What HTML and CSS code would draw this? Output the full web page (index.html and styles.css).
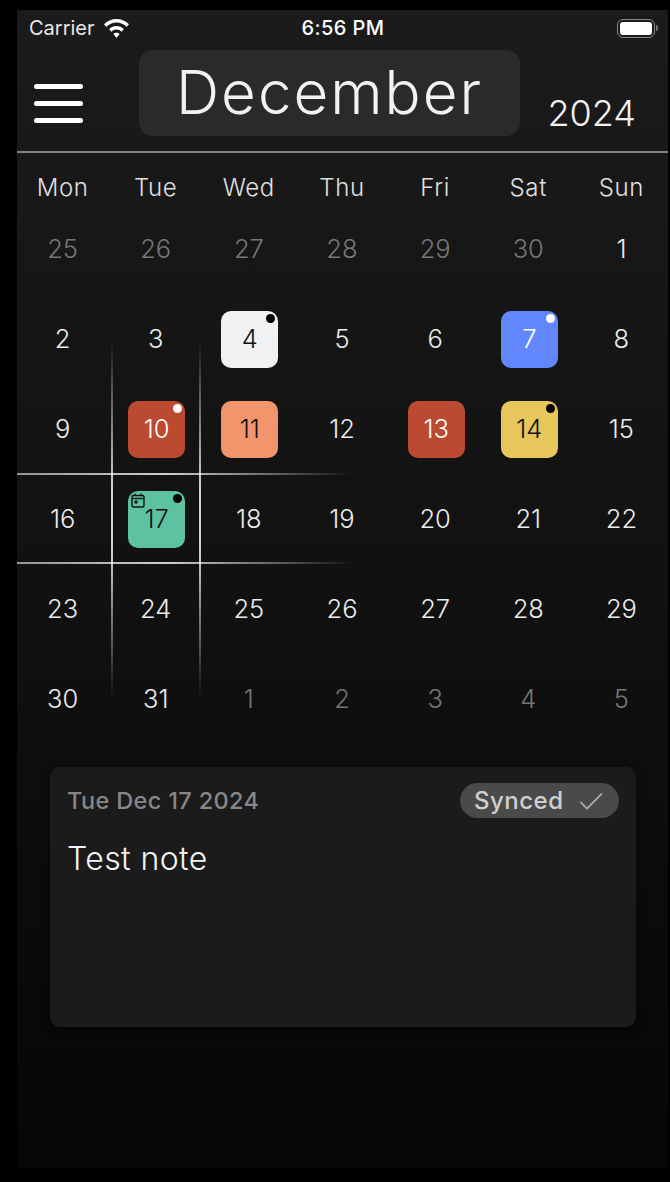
FILE: index.html
```html
<html>

<head>
    <meta charset="utf-8">
    <link rel="stylesheet" href="styles.css">
</head>

<body>
    <div class="screen">
        <div class="status-bar">
            <div class="status-left">
                <span class="carrier">Carrier</span>
                <svg class="wifi" width="25" height="19" viewBox="1 2 23 16.500" preserveAspectRatio="none">
                    <path d="M12.500 2C8 2 4 3.700 1 6.600l2.200 2.300C5.600 6.500 8.900 5.100 12.500 5.100s6.900 1.400 9.300 3.800L24 6.600C21 3.700 17 2 12.500 2z" fill="#fff" />
                    <path d="M12.500 8C10 8 7.500 9 5.700 10.800l2.200 2.300c1.200-1.200 2.800-1.900 4.600-1.900s3.400.7 4.600 1.900l2.200-2.300C17.500 9 15 8 12.500 8z" fill="#fff" />
                    <path d="M12.500 14c-1.100 0-2.100.4-2.800 1.100l2.800 3.400 2.800-3.400c-.7-.7-1.700-1.100-2.800-1.100z" fill="#fff" />
                </svg>
            </div>
            <span class="clock">6:56 PM</span>
            <div class="battery">
                <div class="battery-body"><div class="battery-fill"></div></div>
                <div class="battery-nub"></div>
            </div>
        </div>

        <div class="header">
            <div class="hamburger">
                <span></span>
                <span></span>
                <span></span>
            </div>
            <div class="month">December</div>
            <div class="year">2024</div>
        </div>

        <div class="weekdays">
            <span>Mon</span>
            <span>Tue</span>
            <span>Wed</span>
            <span>Thu</span>
            <span>Fri</span>
            <span>Sat</span>
            <span>Sun</span>
        </div>

        <div class="calendar">
            <div class="day muted">25</div>
            <div class="day muted">26</div>
            <div class="day muted">27</div>
            <div class="day muted">28</div>
            <div class="day muted">29</div>
            <div class="day muted">30</div>
            <div class="day">1</div>

            <div class="day">2</div>
            <div class="day">3</div>
            <div class="day"><div class="tile tile-white">4<i class="dot"></i></div></div>
            <div class="day">5</div>
            <div class="day">6</div>
            <div class="day"><div class="tile tile-blue">7<i class="dot dot-light"></i></div></div>
            <div class="day">8</div>

            <div class="day">9</div>
            <div class="day"><div class="tile tile-red">10<i class="dot dot-light"></i></div></div>
            <div class="day"><div class="tile tile-peach">11</div></div>
            <div class="day">12</div>
            <div class="day"><div class="tile tile-red">13</div></div>
            <div class="day"><div class="tile tile-yellow">14<i class="dot"></i></div></div>
            <div class="day">15</div>

            <div class="day">16</div>
            <div class="day">
                <div class="tile tile-teal">17<i class="dot"></i>
                    <svg class="tile-icon" width="14" height="15" viewBox="0 0 14 15">
                        <rect x="1" y="2.500" width="12" height="11.500" rx="1.500" fill="none" stroke="#111" stroke-width="1.400" />
                        <path d="M1 5.500h12" stroke="#111" stroke-width="1.400" />
                        <path d="M4 .5v2.500M10 .5v2.500" stroke="#111" stroke-width="1.300" />
                        <rect x="3.500" y="7.500" width="3" height="3" fill="#111" />
                    </svg>
                </div>
            </div>
            <div class="day">18</div>
            <div class="day">19</div>
            <div class="day">20</div>
            <div class="day">21</div>
            <div class="day">22</div>

            <div class="day">23</div>
            <div class="day">24</div>
            <div class="day">25</div>
            <div class="day">26</div>
            <div class="day">27</div>
            <div class="day">28</div>
            <div class="day">29</div>

            <div class="day">30</div>
            <div class="day">31</div>
            <div class="day muted">1</div>
            <div class="day muted">2</div>
            <div class="day muted">3</div>
            <div class="day muted">4</div>
            <div class="day muted">5</div>

            <!-- crosshair around the selected day -->
            <div class="line-h line-h-top"></div>
            <div class="line-h line-h-bottom"></div>
            <div class="line-v line-v-left"></div>
            <div class="line-v line-v-right"></div>
        </div>

        <div class="note">
            <div class="note-head">
                <span class="note-date">Tue Dec 17 2024</span>
                <div class="synced">
                    <span>Synced</span>
                    <svg width="24" height="18" viewBox="0 0 24 18">
                        <path d="M1.500 10l6.500 6.500L23 1.500" fill="none" stroke="#b5b5b5" stroke-width="1.600" />
                    </svg>
                </div>
            </div>
            <div class="note-text">Test note</div>
        </div>
    </div>
</body>

</html>
```

FILE: styles.css
```css
body {
    margin: 0;
    background-color: black;
    font-family: "Inter", "Liberation Sans", sans-serif;
}

.screen {
    width: 651px;
    height: 1158px;
    margin-top: 10px;
    margin-left: 17px;
    background: linear-gradient(180deg, #1b1b1b 0%, #101010 55%, #060606 100%);
    color: #f2f2f2;
}

.status-bar {
    height: 36px;
    padding: 0 10px 0 12px;
    display: flex;
    align-items: center;
    justify-content: space-between;
}

.status-left {
    width: 120px;
    display: flex;
    align-items: center;
    gap: 9px;
}

.carrier {
    font-size: 20px;
    color: #e8e8e8;
}

.clock {
    font-size: 20px;
    font-weight: 500;
    letter-spacing: 0.400px;
    margin-right: 80px;
    color: #fff;
}

.battery {
    display: flex;
    align-items: center;
    gap: 1px;
}

.battery-body {
    width: 38px;
    height: 19px;
    box-sizing: border-box;
    padding: 2px;
    border: 1.500px solid #8a8a8a;
    border-radius: 6px;
}

.battery-fill {
    height: 100%;
    background: #fff;
    border-radius: 3px;
}

.battery-nub {
    width: 2px;
    height: 6px;
    background: #777;
    border-radius: 0 2px 2px 0;
}

.header {
    height: 107px;
    box-sizing: border-box;
    padding: 4px 32px 0 17px;
    display: flex;
    align-items: flex-start;
    border-bottom: 2px solid #828282;
}

.hamburger {
    width: 49px;
    margin-top: 34px;
    display: flex;
    flex-direction: column;
    gap: 12px;
}

.hamburger span {
    height: 5px;
    background: #fff;
    border-radius: 3px;
}

.month {
    width: 381px;
    height: 86px;
    margin-left: 56px;
    background: #2a2a2a;
    border-radius: 14px;
    text-align: center;
    font-size: 60px;
    font-weight: 300;
    letter-spacing: 2px;
    line-height: 84px;
}

.year {
    margin-left: auto;
    margin-top: 41px;
    font-size: 36px;
    font-weight: 300;
    line-height: 44px;
}

.weekdays {
    height: 51px;
    box-sizing: border-box;
    padding-top: 21px;
    display: grid;
    grid-template-columns: repeat(7, 93.150px);
    font-size: 24px;
    font-weight: 300;
    letter-spacing: 0.600px;
    line-height: 28px;
    text-align: center;
    color: #e0e0e0;
}

.weekdays span {
    padding-right: 2px;
}

.calendar {
    position: relative;
    display: grid;
    grid-template-columns: repeat(7, 93.150px);
    grid-auto-rows: 90px;
    font-size: 25.500px;
    font-weight: 300;
    color: #ececec;
}

.day {
    display: flex;
    align-items: center;
    justify-content: center;
    padding-right: 2px;
    padding-bottom: 2px;
}

.muted {
    color: #767676;
}

.tile {
    position: relative;
    width: 57px;
    height: 57px;
    box-sizing: border-box;
    margin-left: 2px;
    margin-top: 2px;
    padding-bottom: 2px;
    border-radius: 10px;
    display: flex;
    align-items: center;
    justify-content: center;
    color: #111;
}

.tile-white {
    background: #f0f1f3;
}

.tile-blue {
    background: #6286fb;
    color: #fff;
}

.tile-red {
    background: #bb4a31;
    color: #fff;
}

.tile-peach {
    background: #f2956d;
}

.tile-yellow {
    background: #e7c65c;
}

.tile-teal {
    background: #5cc2a2;
}

.dot {
    position: absolute;
    top: 3px;
    right: 3px;
    width: 9px;
    height: 9px;
    border-radius: 50%;
    background: #000;
}

.dot-light {
    background: #fff;
}

.tile-icon {
    position: absolute;
    top: 2px;
    left: 3px;
}

.line-h {
    position: absolute;
    left: 0;
    width: 335px;
    height: 2px;
    background: linear-gradient(90deg, rgba(255, 255, 255, 0.55) 0%, rgba(255, 255, 255, 0.8) 45%, rgba(255, 255, 255, 0.3) 80%, rgba(255, 255, 255, 0) 100%);
}

.line-h-top {
    top: 269px;
}

.line-h-bottom {
    top: 358px;
}

.line-v {
    position: absolute;
    top: 136px;
    width: 2px;
    height: 358px;
    background: linear-gradient(180deg, rgba(255, 255, 255, 0) 0%, rgba(255, 255, 255, 0.8) 40%, rgba(255, 255, 255, 0.8) 60%, rgba(255, 255, 255, 0) 100%);
}

.line-v-left {
    left: 94px;
}

.line-v-right {
    left: 182px;
}

.note {
    width: 586px;
    height: 260px;
    box-sizing: border-box;
    margin: 23px 0 0 33px;
    padding: 16px 17px 0 17px;
    background: #1b1b1b;
    border-radius: 10px;
    box-shadow: 0 2px 8px rgba(0, 0, 0, 0.5);
}

.note-head {
    display: flex;
    align-items: center;
    justify-content: space-between;
}

.note-date {
    font-size: 23.500px;
    font-weight: 500;
    letter-spacing: 0.350px;
    color: #878787;
}

.synced {
    width: 159px;
    height: 35px;
    box-sizing: border-box;
    padding: 0 16px 0 14px;
    display: flex;
    align-items: center;
    justify-content: space-between;
    background: #4a4a4a;
    border-radius: 18px;
    font-size: 24px;
    font-weight: 500;
    letter-spacing: 0.500px;
    color: #d0d0d0;
}

.note-text {
    margin-top: 20px;
    font-size: 32px;
    font-weight: 300;
    letter-spacing: 0.400px;
    line-height: 42px;
    color: #f5f5f5;
}
```
